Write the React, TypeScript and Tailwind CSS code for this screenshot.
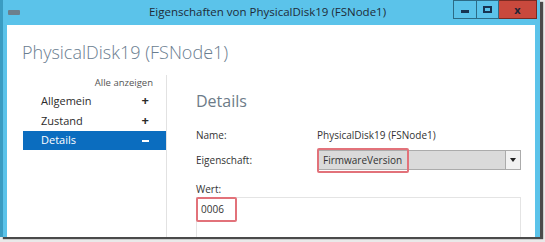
export default function App() {
  return (
    <div
      className="w-[545px] h-[242px] bg-[#e9e9e9] relative overflow-hidden"
      style={{ fontFamily: '"Open Sans", "Noto Sans", sans-serif' }}
    >
      <div className="w-[540px] h-[237px] bg-[#5bc3ea] border-l-[3px] border-[#3a9cc2] flex flex-col shadow-[3px_2px_1px_#4a4a4a]">
        {/* title bar */}
        <div className="h-[25px] flex items-start relative">
          <div className="mt-[10px] ml-[5px] w-[12px] h-[5px] bg-[#6d7f8c] rounded-[1px]" />
          <div className="flex-1 text-center text-[11.5px] text-[#1e2b38] pt-[3px] pl-[62px]">
            Eigenschaften von PhysicalDisk19 (FSNode1)
          </div>
          <div className="flex h-[19px] mr-[3px]">
            <div className="w-[24px] border border-[#2c6b86] flex items-center justify-center">
              <div className="w-[8px] h-[3px] bg-[#173452] mt-[3px]" />
            </div>
            <div className="w-[22px] border border-l-0 border-[#2c6b86] flex items-center justify-center">
              <div className="w-[9px] h-[7px] border-2 border-[#173452]" />
            </div>
            <div className="w-[38px] bg-[#c9493d] border border-l-0 border-[#7a2a22] flex items-center justify-center text-[#1f2436] text-[11px] font-bold leading-none">
              x
            </div>
          </div>
        </div>

        {/* content */}
        <div className="flex-1 bg-white ml-[4px] mr-[5px] flex flex-col">
          <div className="pl-[15px] pt-[14px] h-[50px] text-[18px] font-light text-[#6a7d8f] leading-[26px]">
            PhysicalDisk19 (FSNode1)
          </div>
          <div className="flex flex-1">
            {/* left nav */}
            <div className="w-[159px] pl-[16px] flex flex-col text-[11px] text-[#2b2b2b]">
              <div className="text-right pr-[13px] text-[9.5px] text-[#555] h-[16px] leading-[16px]">
                Alle anzeigen
              </div>
              <div className="flex items-center justify-between h-[20px] pl-[18px] pr-[17px]">
                <span>Allgemein</span>
                <span className="font-bold text-[13px]">+</span>
              </div>
              <div className="flex items-center justify-between h-[20px] pl-[18px] pr-[17px]">
                <span>Zustand</span>
                <span className="font-bold text-[13px]">+</span>
              </div>
              <div className="flex items-center justify-between h-[19px] pl-[18px] pr-[17px] bg-[#0b6dbf] text-white">
                <span>Details</span>
                <span className="w-[7px] h-[2px] bg-white" />
              </div>
            </div>
            {/* right panel */}
            <div className="flex-1 border-l border-[#e2e2e2] pl-[29px] pr-[14px] flex flex-col text-[10px] text-[#333]">
              <div className="pt-[15px] h-[50px] text-[16px] text-[#6d7b88] leading-[22px]">
                Details
              </div>
              <div className="flex items-center h-[20px]">
                <span className="w-[121px]">Name:</span>
                <span>PhysicalDisk19 (FSNode1)</span>
              </div>
              <div className="flex items-center h-[26px] mt-[2px]">
                <span className="w-[121px]">Eigenschaft:</span>
                <div className="flex-1 h-[20px] bg-[#dadada] border border-[#ababab] flex items-center relative">
                  <span className="pl-[5px]">FirmwareVersion</span>
                  <div className="ml-auto w-[15px] h-full border-l border-[#ababab] bg-[#f2f2f2] flex items-center justify-center">
                    <div className="w-0 h-0 border-l-[3px] border-r-[3px] border-t-[4px] border-l-transparent border-r-transparent border-t-[#222]" />
                  </div>
                  <div className="absolute -left-[1px] -top-[3px] w-[92px] h-[25px] border-2 border-[#e2727a] rounded-[2px]" />
                </div>
              </div>
              <div className="h-[20px] flex items-end mt-[4px]">Wert:</div>
              <div className="flex-1 border border-b-0 border-[#e4e4e4] mt-[0px] relative">
                <div className="absolute -left-[1px] -top-[1px] w-[41px] h-[25px] border-2 border-[#e2727a] rounded-[2px] flex items-center pl-[3px] text-[10px]">
                  0006
                </div>
              </div>
            </div>
          </div>
        </div>
      </div>
    </div>
  );
}
